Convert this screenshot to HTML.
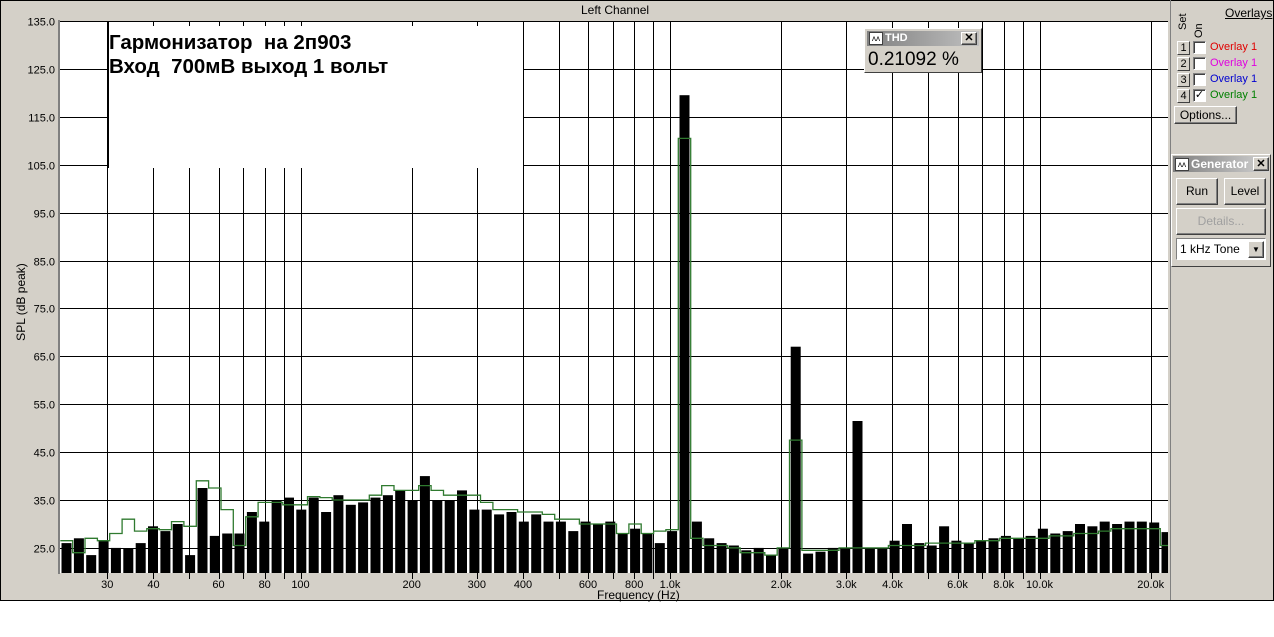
<!DOCTYPE html>
<html><head><meta charset="utf-8"><style>
body{margin:0;width:1274px;height:637px;background:#fff;overflow:hidden;font-family:"Liberation Sans",sans-serif}
#win{position:absolute;left:0;top:0;width:1272px;height:599px;background:#d4d0c8;border:1px solid #000}
.t{position:absolute;font-size:11px;color:#000;white-space:nowrap}
.btn{position:absolute;background:#d4d0c8;border:1px solid;border-color:#fff #404040 #404040 #fff;box-shadow:inset -1px -1px 0 #808080;font-size:12px;text-align:center}
.cb{position:absolute;width:11px;height:11px;background:#fff;border:1px solid;border-color:#808080 #fff #fff #808080;box-shadow:inset 1px 1px 0 #404040}
.num{position:absolute;width:11px;height:12px;border:1px solid;border-color:#fff #404040 #404040 #fff;font-size:11px;line-height:12px;text-align:center;background:#d4d0c8}
</style></head><body>
<div id="win">
<svg id="plot" width="1172" height="600" style="position:absolute;left:0;top:0" font-family="Liberation Sans, sans-serif"></svg>
<div class="t" style="left:580px;top:2px;font-size:12px">Left Channel</div>
<div class="t" style="left:-30px;top:294px;transform:rotate(-90deg);font-size:12px;width:100px;text-align:center">SPL (dB peak)</div>
<div class="t" style="left:596px;top:587px;font-size:12px">Frequency (Hz)</div>
<div style="position:absolute;left:863px;top:27px;width:116px;height:43px;background:#d4d0c8;border:1px solid;border-color:#fff #404040 #404040 #fff">
 <div style="position:absolute;left:2px;top:2px;width:112px;height:15px;background:linear-gradient(90deg,#808080,#c0c0c0)"></div>
 <div style="position:absolute;left:4px;top:3px;width:12px;height:11px;background:#fff;border:1px solid #404040;font-size:8px;line-height:11px;text-align:center">ʌʌ</div>
 <div class="t" style="left:20px;top:3px;color:#fff;font-weight:bold">THD</div>
 <div class="btn" style="left:96px;top:3px;width:14px;height:11px;font-size:11px;line-height:11px;font-weight:bold">✕</div>
 <div class="t" style="left:3px;top:20px;font-size:19px">0.21092 %</div>
</div>
</div>
<div style="position:absolute;left:1170px;top:0;width:1px;height:600px;background:#808080"></div>
<div class="t" style="left:1225px;top:6px;text-decoration:underline;font-size:12px">Overlays</div>
<div class="t" style="left:1177px;top:30px;transform:rotate(-90deg);transform-origin:0 0;font-size:11px">Set</div>
<div class="t" style="left:1193px;top:38px;transform:rotate(-90deg);transform-origin:0 0;font-size:11px">On</div>
<div id="ov"></div>
<div class="btn" style="left:1174px;top:106px;width:61px;height:16px;line-height:16px">Options...</div>
<div style="position:absolute;left:1171px;top:154px;width:98px;height:111px;border:1px solid;border-color:#fff #404040 #404040 #fff;background:#d4d0c8">
 <div style="position:absolute;left:1px;top:1px;width:96px;height:16px;background:linear-gradient(90deg,#808080,#d0d0d0)"></div>
 <div style="position:absolute;left:3px;top:3px;width:12px;height:11px;background:#fff;border:1px solid #404040;font-size:8px;line-height:11px;text-align:center">ʌʌ</div>
 <div class="t" style="left:19px;top:2px;color:#fff;font-weight:bold;font-size:12px">Generator</div>
 <div class="btn" style="left:81px;top:2px;width:14px;height:12px;font-size:11px;line-height:12px;font-weight:bold;background:#d4d0c8">✕</div>
 <div class="btn" style="left:4px;top:23px;width:40px;height:25px;line-height:25px">Run</div>
 <div class="btn" style="left:52px;top:23px;width:40px;height:25px;line-height:25px">Level</div>
 <div class="btn" style="left:4px;top:53px;width:88px;height:25px;line-height:25px;color:#a0a0a0">Details...</div>
 <div style="position:absolute;left:4px;top:83px;width:88px;height:20px;background:#fff;border:1px solid;border-color:#808080 #fff #fff #808080;font-size:12px;line-height:20px;text-indent:3px">1 kHz Tone
  <div class="btn" style="left:71px;top:2px;width:14px;height:15px;font-size:8px;line-height:15px;text-indent:0">▼</div></div>
</div>
<script>
var s=document.getElementById('plot'),h='';
function Y(d){return 20+(135-d)*4.79}
function X(f){return 669+369.5*Math.log10(f/1000)}
h+='<rect x="59" y="20" width="1110" height="552" fill="#fff"/>';
h+='<line x1="58" y1="19" x2="58" y2="573" stroke="#808080" stroke-width="2"/>';
var fs=[30,40,50,60,70,80,90,100,200,300,400,500,600,700,800,900,1000,2000,3000,4000,5000,6000,7000,8000,9000,10000,20000];
fs.forEach(function(f){var x=Math.round(X(f))+.5;h+='<line x1="'+x+'" y1="20" x2="'+x+'" y2="578" stroke="#000"/>';});
for(var d=135;d>=25;d-=10){var y=Math.round(Y(d))+.5;h+='<line x1="59" y1="'+y+'" x2="1169" y2="'+y+'" stroke="#000"/>';
h+='<text x="54" y="'+(y+4)+'" font-size="11" text-anchor="end">'+d.toFixed(1)+'</text>';}
var b=[26,27,23.5,26.5,25,24.8,26,29.5,28.5,30,23.5,37.5,27.5,28,28,32.5,30.5,35,35.5,33,35.5,32.5,36,34,34.5,35.5,36,37,35,40,35,35,37,33,33,32,32.5,30.5,32,30.5,30.5,28.5,30.5,30,30.5,28,29,28,26,28.5,119.5,30.5,27,26,25.5,24.5,25,23.5,25,67,23.8,24.2,25,24.8,51.5,24.8,24.8,26.5,30,26,25.5,29.5,26.5,26,26.5,27,27.5,27,27.5,29,28,28.5,30,29.5,30.5,30,30.5,30.5,30.3,28.3];
var o=[26.5,24,27,26.5,28,31,28.5,29,28.8,30.5,29.5,39,37.5,33,25.5,31.5,34.5,34.5,34,34,35.7,35.5,35,35,35,36,38,37,37,38,37,36,36,36,34.5,33,33,32.5,32.5,32,31,31,30,30,30,28,30,28,28.5,28.8,110.5,27,25.5,25.5,25,24,24,23.5,25,47.5,24.5,24.5,24.5,25,25,25,25,25.5,25.5,25.5,26,26,26,26,26.5,26.5,27,27,27,27,27.5,27.5,28,28,28.5,29,29,29,29,25.5];
var p='';
for(var i=0;i<90;i++){var x=60.5+12.36*i,w=Math.min(10,1169-x),y=Y(b[i]);
h+='<rect x="'+x.toFixed(1)+'" y="'+y.toFixed(1)+'" width="'+w.toFixed(1)+'" height="'+(572-y).toFixed(1)+'" fill="#000"/>';
var x0=Math.max(59,x-1.2),x1=Math.min(1169,x+11.16),yo=Y(o[i]).toFixed(1);p+=(i?'L':'M')+x0.toFixed(1)+' '+yo+' L'+x1.toFixed(1)+' '+yo+' ';}
h+='<path d="'+p+'" fill="none" stroke="#2f7a2f" stroke-width="1.3"/>';
h+='<rect x="108" y="21" width="414" height="146" fill="#fff"/>';
h+='<line x1="107.5" y1="20" x2="107.5" y2="167" stroke="#000"/>';
fs.forEach(function(f){var x=Math.round(X(f))+.5;if(x>108&&x<522)h+='<line x1="'+x+'" y1="20" x2="'+x+'" y2="25" stroke="#000"/>';});
h+='<line x1="59" y1="20.5" x2="1169" y2="20.5" stroke="#000"/>';
h+='<text x="108" y="48" font-size="20.5" font-weight="bold" style="white-space:pre" xml:space="preserve">Гармонизатор  на 2п903</text>';
h+='<text x="108" y="72" font-size="20.5" font-weight="bold" style="white-space:pre" xml:space="preserve">Вход  700мВ выход 1 вольт</text>';
h+='<rect x="1167" y="20" width="4" height="553" fill="#d4d0c8"/>';
var L=[[30,'30'],[40,'40'],[60,'60'],[80,'80'],[100,'100'],[200,'200'],[300,'300'],[400,'400'],[600,'600'],[800,'800'],[1000,'1.0k'],[2000,'2.0k'],[3000,'3.0k'],[4000,'4.0k'],[6000,'6.0k'],[8000,'8.0k'],[10000,'10.0k'],[20000,'20.0k']];
L.forEach(function(l){h+='<text x="'+X(l[0]).toFixed(1)+'" y="587" font-size="11" text-anchor="middle">'+l[1]+'</text>';});
s.innerHTML=h;
var ov='',cols=['#e00000','#e000e0','#0000d0','#008000'];
for(var k=0;k<4;k++){var t=41+k*16;
ov+='<div class="num" style="left:1177px;top:'+t+'px">'+(k+1)+'</div><div class="cb" style="left:1193px;top:'+t+'px;font-size:11px;line-height:11px;text-align:center">'+(k==3?'✓':'')+'</div><div class="t" style="left:1210px;top:'+t+'px;color:'+cols[k]+'">Overlay 1</div>';}
document.getElementById('ov').innerHTML=ov;
</script>
</body></html>
